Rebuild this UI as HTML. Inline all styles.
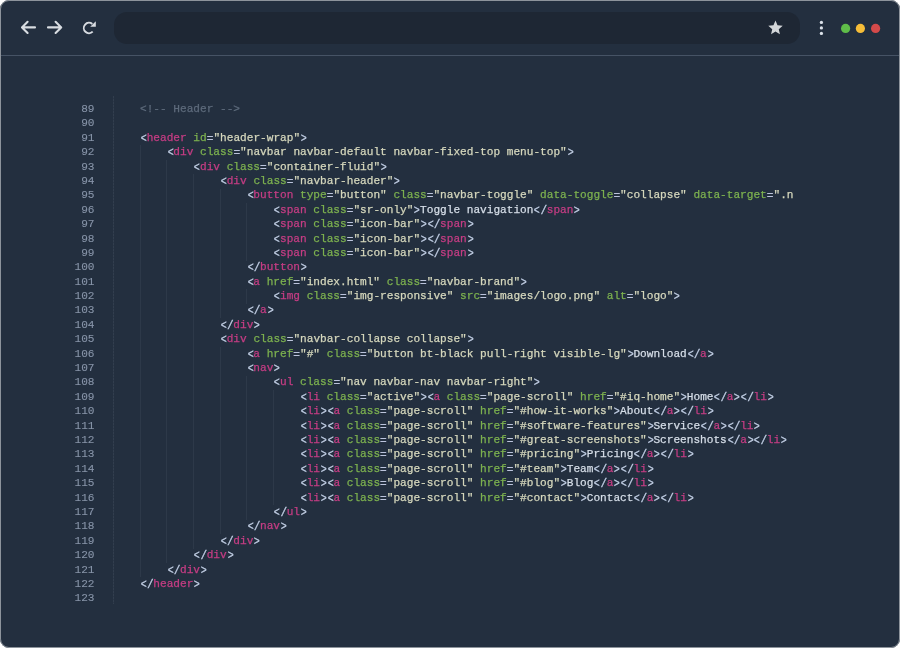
<!DOCTYPE html>
<html><head><meta charset="utf-8">
<style>
html,body{margin:0;padding:0;background:#ffffff;}
body{width:900px;height:648px;position:relative;overflow:hidden;}
.frame{position:absolute;left:0;top:0;width:900px;height:648px;box-sizing:border-box;border-radius:9px;background:#232f3f;overflow:hidden;}
.edge{position:absolute;left:0;top:0;width:900px;height:648px;box-sizing:border-box;border:1px solid #8d949c;border-radius:9px;pointer-events:none;}
.bar{position:absolute;left:0;top:0;width:100%;height:55px;border-bottom:1px solid #465365;}
.addr{position:absolute;left:114px;top:12px;width:686px;height:32px;border-radius:13px;background:#1e2734;}
svg{position:absolute;overflow:visible;}
.dot{position:absolute;width:10px;height:10px;border-radius:50%;}
.code{position:absolute;will-change:transform;left:140.2px;top:102.2px;font-family:"Liberation Mono",monospace;font-size:11.117px;line-height:14.4px;white-space:pre;color:#cdd5de;}
.nums{position:absolute;will-change:transform;left:0;width:94.5px;top:102.2px;font-family:"Liberation Mono",monospace;font-size:11.117px;line-height:14.4px;text-align:right;color:#8895a9;}
.l{height:14.4px;}
b{font-weight:normal;}
u{text-decoration:none;display:inline-block;}
.lt{transform:translateX(0.5px) scale(0.9,1.15);transform-origin:50% 42%;}
.sl{transform:translateX(0.4px) scale(1,1.22);transform-origin:50% 42%;}
.code{-webkit-text-stroke:0.25px currentColor;}
.nums{-webkit-text-stroke:0.1px currentColor;}
.p{color:#c3d0e6;}
.t{color:#c63d84;}
.a{color:#7db24f;}
.e{color:#bcc5dc;display:inline-block;transform:translateY(0.8px);}
.s{color:#d6d8bd;}
.x{color:#d6dee8;}
.c{font-style:normal;color:#5d6a7b;}
.g{position:absolute;width:1px;background:#2d3949;}
.gut{position:absolute;left:113px;width:1px;background:repeating-linear-gradient(to bottom,#323e4e 0,#323e4e 2px,#2a3646 2px,#2a3646 3px);}
</style></head><body>
<div class="frame">
  <div class="bar"></div>
  <div class="addr"></div>
  <svg style="left:0;top:0" width="900" height="56">
    <g stroke="#d8dce1" stroke-width="2.1" fill="none" stroke-linecap="round" stroke-linejoin="round">
      <path d="M35 27.4H22 M27.6 21.8L22 27.4L27.6 33"/>
      <path d="M48 27.4H61.2 M55.6 21.8L61.2 27.4L55.6 33"/>
    </g>
    <path d="M92.34 24.02A5.2 5.2 0 1 0 92.68 31.68" stroke="#d8dce1" stroke-width="1.9" fill="none"/>
    <path d="M95.8 21.2V26.8H90.2Z" fill="#d8dce1"/>
    <path transform="translate(766.86 19.16) scale(0.72)" fill="#d3d6d9" d="M12 17.27L18.18 21l-1.64-7.03L22 9.24l-7.19-.61L12 2 9.19 8.63 2 9.24l5.46 4.73L5.82 21z"/>
    <circle cx="821.4" cy="22.4" r="1.65" fill="#dce2ea"/>
    <circle cx="821.4" cy="27.9" r="1.65" fill="#dce2ea"/>
    <circle cx="821.4" cy="33.4" r="1.65" fill="#dce2ea"/>
    <circle cx="845.6" cy="28.4" r="4.6" fill="#5fbd49"/>
    <circle cx="860.4" cy="28.4" r="4.6" fill="#f6bd38"/>
    <circle cx="875.6" cy="28.4" r="4.6" fill="#d44a4a"/>
  </svg>
  <div class="gut" style="top:96px;height:507.5px"></div>
  <div class="g" style="left:139.70px;top:145.40px;height:432.00px"></div>
<div class="g" style="left:166.39px;top:159.80px;height:403.20px"></div>
<div class="g" style="left:193.08px;top:174.20px;height:374.40px"></div>
<div class="g" style="left:219.76px;top:188.60px;height:129.60px"></div>
<div class="g" style="left:219.76px;top:347.00px;height:187.20px"></div>
<div class="g" style="left:246.45px;top:203.00px;height:57.60px"></div>
<div class="g" style="left:246.45px;top:289.40px;height:14.40px"></div>
<div class="g" style="left:246.45px;top:375.80px;height:144.00px"></div>
<div class="g" style="left:273.14px;top:390.20px;height:115.20px"></div>
  <div class="nums">
<div class="l">89</div><div class="l">90</div><div class="l">91</div><div class="l">92</div><div class="l">93</div><div class="l">94</div><div class="l">95</div><div class="l">96</div><div class="l">97</div><div class="l">98</div><div class="l">99</div><div class="l">100</div><div class="l">101</div><div class="l">102</div><div class="l">103</div><div class="l">104</div><div class="l">105</div><div class="l">106</div><div class="l">107</div><div class="l">108</div><div class="l">109</div><div class="l">110</div><div class="l">111</div><div class="l">112</div><div class="l">113</div><div class="l">114</div><div class="l">115</div><div class="l">116</div><div class="l">117</div><div class="l">118</div><div class="l">119</div><div class="l">120</div><div class="l">121</div><div class="l">122</div><div class="l">123</div>
  </div>
  <div class="code"><div class="l"><i class="c">&lt;!-- Header --&gt;</i></div><div class="l"></div><div class="l"><b class="p"><u class="lt">&lt;</u></b><b class="t">header</b> <b class="a">id</b><b class="e">=</b><b class="s">"header-wrap"</b><b class="p"><u class="lt">&gt;</u></b></div><div class="l">    <b class="p"><u class="lt">&lt;</u></b><b class="t">div</b> <b class="a">class</b><b class="e">=</b><b class="s">"navbar navbar-default navbar-fixed-top menu-top"</b><b class="p"><u class="lt">&gt;</u></b></div><div class="l">        <b class="p"><u class="lt">&lt;</u></b><b class="t">div</b> <b class="a">class</b><b class="e">=</b><b class="s">"container-fluid"</b><b class="p"><u class="lt">&gt;</u></b></div><div class="l">            <b class="p"><u class="lt">&lt;</u></b><b class="t">div</b> <b class="a">class</b><b class="e">=</b><b class="s">"navbar-header"</b><b class="p"><u class="lt">&gt;</u></b></div><div class="l">                <b class="p"><u class="lt">&lt;</u></b><b class="t">button</b> <b class="a">type</b><b class="e">=</b><b class="s">"button"</b> <b class="a">class</b><b class="e">=</b><b class="s">"navbar-toggle"</b> <b class="a">data-toggle</b><b class="e">=</b><b class="s">"collapse"</b> <b class="a">data-target</b><b class="e">=</b><b class="s">".n</b></div><div class="l">                    <b class="p"><u class="lt">&lt;</u></b><b class="t">span</b> <b class="a">class</b><b class="e">=</b><b class="s">"sr-only"</b><b class="p"><u class="lt">&gt;</u></b><b class="x">Toggle navigation</b><b class="p"><u class="lt">&lt;</u><u class="sl">/</u></b><b class="t">span</b><b class="p"><u class="lt">&gt;</u></b></div><div class="l">                    <b class="p"><u class="lt">&lt;</u></b><b class="t">span</b> <b class="a">class</b><b class="e">=</b><b class="s">"icon-bar"</b><b class="p"><u class="lt">&gt;</u></b><b class="p"><u class="lt">&lt;</u><u class="sl">/</u></b><b class="t">span</b><b class="p"><u class="lt">&gt;</u></b></div><div class="l">                    <b class="p"><u class="lt">&lt;</u></b><b class="t">span</b> <b class="a">class</b><b class="e">=</b><b class="s">"icon-bar"</b><b class="p"><u class="lt">&gt;</u></b><b class="p"><u class="lt">&lt;</u><u class="sl">/</u></b><b class="t">span</b><b class="p"><u class="lt">&gt;</u></b></div><div class="l">                    <b class="p"><u class="lt">&lt;</u></b><b class="t">span</b> <b class="a">class</b><b class="e">=</b><b class="s">"icon-bar"</b><b class="p"><u class="lt">&gt;</u></b><b class="p"><u class="lt">&lt;</u><u class="sl">/</u></b><b class="t">span</b><b class="p"><u class="lt">&gt;</u></b></div><div class="l">                <b class="p"><u class="lt">&lt;</u><u class="sl">/</u></b><b class="t">button</b><b class="p"><u class="lt">&gt;</u></b></div><div class="l">                <b class="p"><u class="lt">&lt;</u></b><b class="t">a</b> <b class="a">href</b><b class="e">=</b><b class="s">"index.html"</b> <b class="a">class</b><b class="e">=</b><b class="s">"navbar-brand"</b><b class="p"><u class="lt">&gt;</u></b></div><div class="l">                    <b class="p"><u class="lt">&lt;</u></b><b class="t">img</b> <b class="a">class</b><b class="e">=</b><b class="s">"img-responsive"</b> <b class="a">src</b><b class="e">=</b><b class="s">"images/logo.png"</b> <b class="a">alt</b><b class="e">=</b><b class="s">"logo"</b><b class="p"><u class="lt">&gt;</u></b></div><div class="l">                <b class="p"><u class="lt">&lt;</u><u class="sl">/</u></b><b class="t">a</b><b class="p"><u class="lt">&gt;</u></b></div><div class="l">            <b class="p"><u class="lt">&lt;</u><u class="sl">/</u></b><b class="t">div</b><b class="p"><u class="lt">&gt;</u></b></div><div class="l">            <b class="p"><u class="lt">&lt;</u></b><b class="t">div</b> <b class="a">class</b><b class="e">=</b><b class="s">"navbar-collapse collapse"</b><b class="p"><u class="lt">&gt;</u></b></div><div class="l">                <b class="p"><u class="lt">&lt;</u></b><b class="t">a</b> <b class="a">href</b><b class="e">=</b><b class="s">"#"</b> <b class="a">class</b><b class="e">=</b><b class="s">"button bt-black pull-right visible-lg"</b><b class="p"><u class="lt">&gt;</u></b><b class="x">Download</b><b class="p"><u class="lt">&lt;</u><u class="sl">/</u></b><b class="t">a</b><b class="p"><u class="lt">&gt;</u></b></div><div class="l">                <b class="p"><u class="lt">&lt;</u></b><b class="t">nav</b><b class="p"><u class="lt">&gt;</u></b></div><div class="l">                    <b class="p"><u class="lt">&lt;</u></b><b class="t">ul</b> <b class="a">class</b><b class="e">=</b><b class="s">"nav navbar-nav navbar-right"</b><b class="p"><u class="lt">&gt;</u></b></div><div class="l">                        <b class="p"><u class="lt">&lt;</u></b><b class="t">li</b> <b class="a">class</b><b class="e">=</b><b class="s">"active"</b><b class="p"><u class="lt">&gt;</u></b><b class="p"><u class="lt">&lt;</u></b><b class="t">a</b> <b class="a">class</b><b class="e">=</b><b class="s">"page-scroll"</b> <b class="a">href</b><b class="e">=</b><b class="s">"#iq-home"</b><b class="p"><u class="lt">&gt;</u></b><b class="x">Home</b><b class="p"><u class="lt">&lt;</u><u class="sl">/</u></b><b class="t">a</b><b class="p"><u class="lt">&gt;</u></b><b class="p"><u class="lt">&lt;</u><u class="sl">/</u></b><b class="t">li</b><b class="p"><u class="lt">&gt;</u></b></div><div class="l">                        <b class="p"><u class="lt">&lt;</u></b><b class="t">li</b><b class="p"><u class="lt">&gt;</u></b><b class="p"><u class="lt">&lt;</u></b><b class="t">a</b> <b class="a">class</b><b class="e">=</b><b class="s">"page-scroll"</b> <b class="a">href</b><b class="e">=</b><b class="s">"#how-it-works"</b><b class="p"><u class="lt">&gt;</u></b><b class="x">About</b><b class="p"><u class="lt">&lt;</u><u class="sl">/</u></b><b class="t">a</b><b class="p"><u class="lt">&gt;</u></b><b class="p"><u class="lt">&lt;</u><u class="sl">/</u></b><b class="t">li</b><b class="p"><u class="lt">&gt;</u></b></div><div class="l">                        <b class="p"><u class="lt">&lt;</u></b><b class="t">li</b><b class="p"><u class="lt">&gt;</u></b><b class="p"><u class="lt">&lt;</u></b><b class="t">a</b> <b class="a">class</b><b class="e">=</b><b class="s">"page-scroll"</b> <b class="a">href</b><b class="e">=</b><b class="s">"#software-features"</b><b class="p"><u class="lt">&gt;</u></b><b class="x">Service</b><b class="p"><u class="lt">&lt;</u><u class="sl">/</u></b><b class="t">a</b><b class="p"><u class="lt">&gt;</u></b><b class="p"><u class="lt">&lt;</u><u class="sl">/</u></b><b class="t">li</b><b class="p"><u class="lt">&gt;</u></b></div><div class="l">                        <b class="p"><u class="lt">&lt;</u></b><b class="t">li</b><b class="p"><u class="lt">&gt;</u></b><b class="p"><u class="lt">&lt;</u></b><b class="t">a</b> <b class="a">class</b><b class="e">=</b><b class="s">"page-scroll"</b> <b class="a">href</b><b class="e">=</b><b class="s">"#great-screenshots"</b><b class="p"><u class="lt">&gt;</u></b><b class="x">Screenshots</b><b class="p"><u class="lt">&lt;</u><u class="sl">/</u></b><b class="t">a</b><b class="p"><u class="lt">&gt;</u></b><b class="p"><u class="lt">&lt;</u><u class="sl">/</u></b><b class="t">li</b><b class="p"><u class="lt">&gt;</u></b></div><div class="l">                        <b class="p"><u class="lt">&lt;</u></b><b class="t">li</b><b class="p"><u class="lt">&gt;</u></b><b class="p"><u class="lt">&lt;</u></b><b class="t">a</b> <b class="a">class</b><b class="e">=</b><b class="s">"page-scroll"</b> <b class="a">href</b><b class="e">=</b><b class="s">"#pricing"</b><b class="p"><u class="lt">&gt;</u></b><b class="x">Pricing</b><b class="p"><u class="lt">&lt;</u><u class="sl">/</u></b><b class="t">a</b><b class="p"><u class="lt">&gt;</u></b><b class="p"><u class="lt">&lt;</u><u class="sl">/</u></b><b class="t">li</b><b class="p"><u class="lt">&gt;</u></b></div><div class="l">                        <b class="p"><u class="lt">&lt;</u></b><b class="t">li</b><b class="p"><u class="lt">&gt;</u></b><b class="p"><u class="lt">&lt;</u></b><b class="t">a</b> <b class="a">class</b><b class="e">=</b><b class="s">"page-scroll"</b> <b class="a">href</b><b class="e">=</b><b class="s">"#team"</b><b class="p"><u class="lt">&gt;</u></b><b class="x">Team</b><b class="p"><u class="lt">&lt;</u><u class="sl">/</u></b><b class="t">a</b><b class="p"><u class="lt">&gt;</u></b><b class="p"><u class="lt">&lt;</u><u class="sl">/</u></b><b class="t">li</b><b class="p"><u class="lt">&gt;</u></b></div><div class="l">                        <b class="p"><u class="lt">&lt;</u></b><b class="t">li</b><b class="p"><u class="lt">&gt;</u></b><b class="p"><u class="lt">&lt;</u></b><b class="t">a</b> <b class="a">class</b><b class="e">=</b><b class="s">"page-scroll"</b> <b class="a">href</b><b class="e">=</b><b class="s">"#blog"</b><b class="p"><u class="lt">&gt;</u></b><b class="x">Blog</b><b class="p"><u class="lt">&lt;</u><u class="sl">/</u></b><b class="t">a</b><b class="p"><u class="lt">&gt;</u></b><b class="p"><u class="lt">&lt;</u><u class="sl">/</u></b><b class="t">li</b><b class="p"><u class="lt">&gt;</u></b></div><div class="l">                        <b class="p"><u class="lt">&lt;</u></b><b class="t">li</b><b class="p"><u class="lt">&gt;</u></b><b class="p"><u class="lt">&lt;</u></b><b class="t">a</b> <b class="a">class</b><b class="e">=</b><b class="s">"page-scroll"</b> <b class="a">href</b><b class="e">=</b><b class="s">"#contact"</b><b class="p"><u class="lt">&gt;</u></b><b class="x">Contact</b><b class="p"><u class="lt">&lt;</u><u class="sl">/</u></b><b class="t">a</b><b class="p"><u class="lt">&gt;</u></b><b class="p"><u class="lt">&lt;</u><u class="sl">/</u></b><b class="t">li</b><b class="p"><u class="lt">&gt;</u></b></div><div class="l">                    <b class="p"><u class="lt">&lt;</u><u class="sl">/</u></b><b class="t">ul</b><b class="p"><u class="lt">&gt;</u></b></div><div class="l">                <b class="p"><u class="lt">&lt;</u><u class="sl">/</u></b><b class="t">nav</b><b class="p"><u class="lt">&gt;</u></b></div><div class="l">            <b class="p"><u class="lt">&lt;</u><u class="sl">/</u></b><b class="t">div</b><b class="p"><u class="lt">&gt;</u></b></div><div class="l">        <b class="p"><u class="lt">&lt;</u><u class="sl">/</u></b><b class="t">div</b><b class="p"><u class="lt">&gt;</u></b></div><div class="l">    <b class="p"><u class="lt">&lt;</u><u class="sl">/</u></b><b class="t">div</b><b class="p"><u class="lt">&gt;</u></b></div><div class="l"><b class="p"><u class="lt">&lt;</u><u class="sl">/</u></b><b class="t">header</b><b class="p"><u class="lt">&gt;</u></b></div><div class="l"></div></div>
</div>
<div class="edge"></div>
</body></html>
